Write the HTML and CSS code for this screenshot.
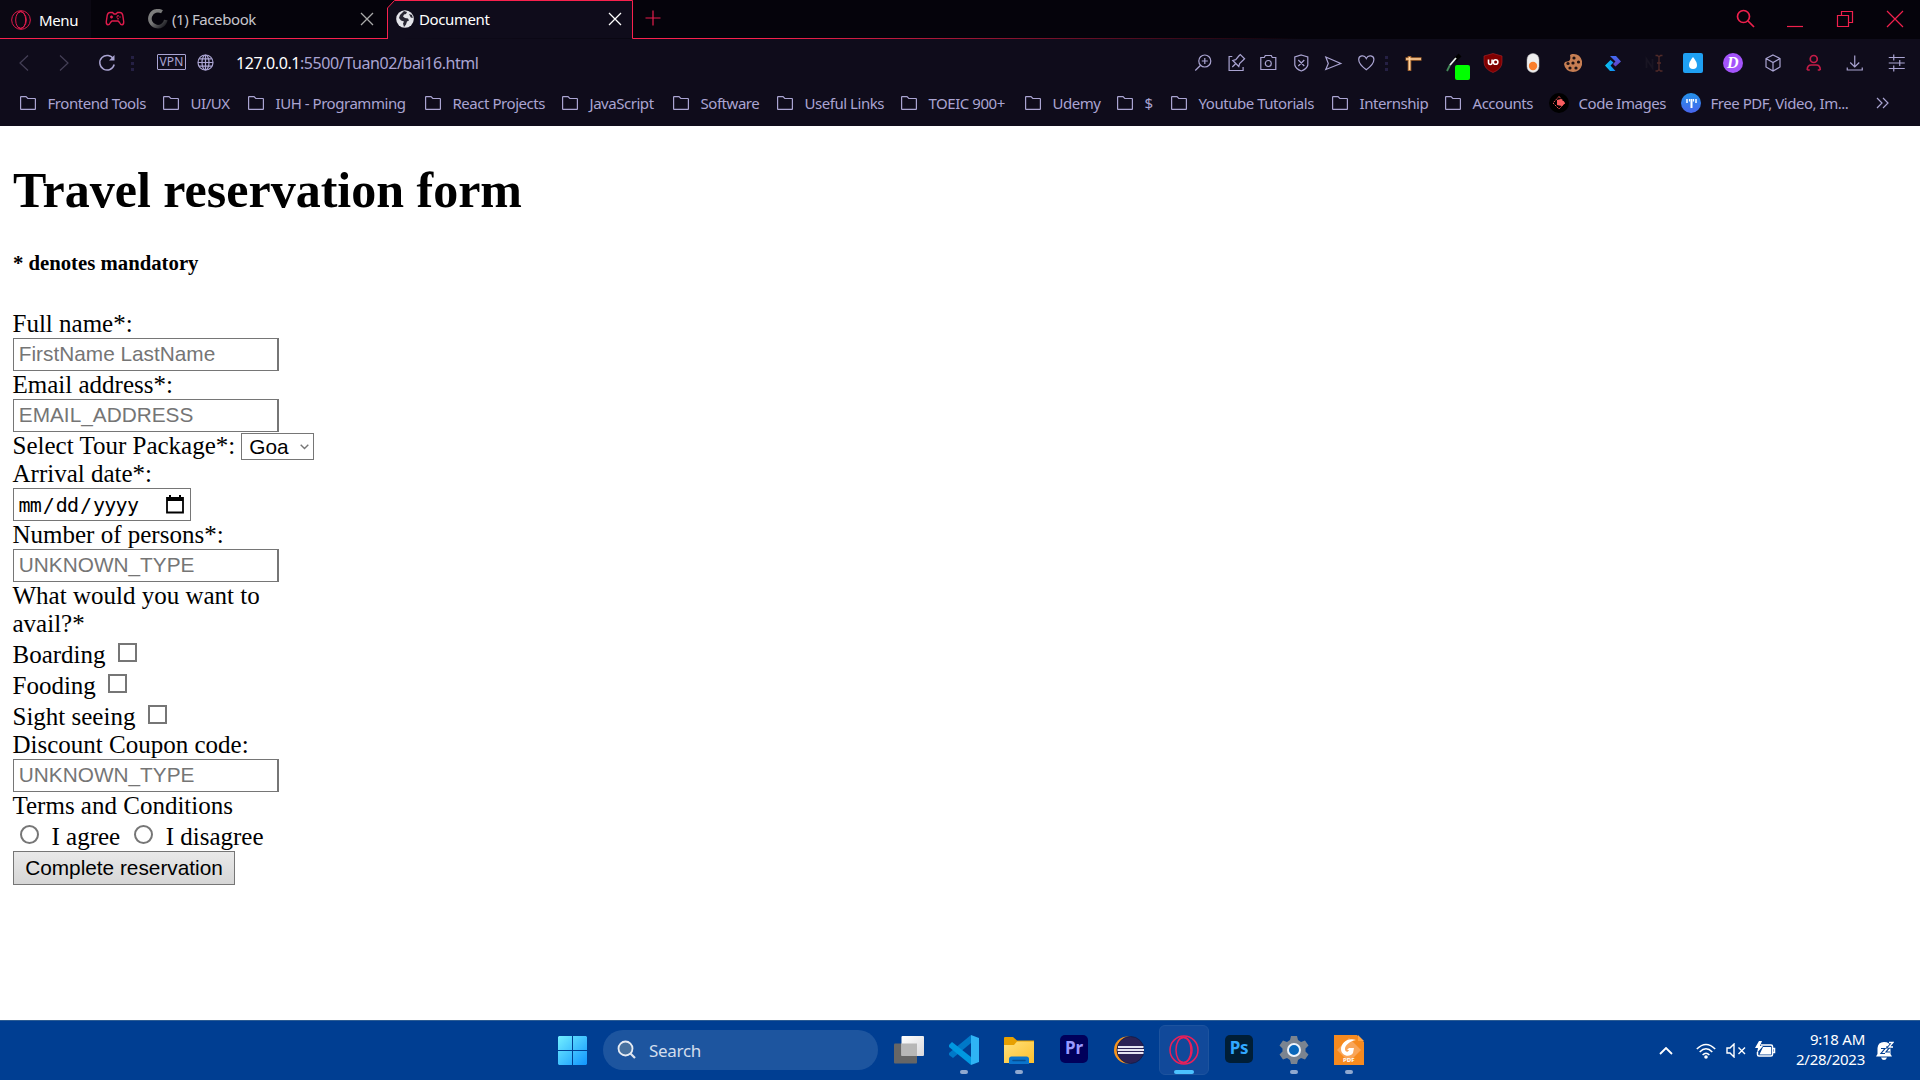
FILE: index.html
```html
<!DOCTYPE html>
<html lang="en">
<head>
<meta charset="utf-8">
<title>Document</title>
<link rel="stylesheet" href="styles.css">
</head>
<body>
<svg class="defs" width="0" height="0">
  <defs>
    <symbol id="folder" viewBox="0 0 16 14"><path d="M.6 13.1V1.1q0-.5.5-.5H6l1.8 1.9h7.1q.5 0 .5.5v10.1q0 .3-.5.3H1.1q-.5 0-.5-.4z" fill="none" stroke="currentColor" stroke-width="1.2"/></symbol>
    <symbol id="close" viewBox="0 0 14 14"><path d="M1 1l12 12M13 1L1 13" fill="none" stroke="currentColor" stroke-width="1.3"/></symbol>
    <symbol id="opera" viewBox="0 0 30 30"><g fill="none" stroke="currentColor" stroke-width="1.500"><circle cx="15" cy="15" r="14"/><ellipse cx="14.500" cy="15" rx="7.5" ry="12.8"/><path d="M10 4.500Q15 .5 19 4.500Q23 9 23 15T19 25.500Q15 29.500 10 25.500"/></g></symbol>
    <linearGradient id="win" x2="1" y2="1"><stop stop-color="#72efff"/><stop offset="1" stop-color="#1095ff"/></linearGradient>
    <linearGradient id="fold" x2="1" y2="1"><stop stop-color="#ffe17a"/><stop offset="1" stop-color="#fdc02e"/></linearGradient>
    <linearGradient id="arrow" x2="1" y2="0"><stop stop-color="#08c9ed"/><stop offset="1" stop-color="#1683f5"/></linearGradient>
    <linearGradient id="violet" x2="0" y2="1"><stop stop-color="#3f6cf5"/><stop offset="1" stop-color="#6a3fc0"/></linearGradient>
    <linearGradient id="white" x2="1" y2="1"><stop stop-color="#fff"/><stop offset="1" stop-color="#d8d8dc"/></linearGradient>
    <linearGradient id="pdf" x2="0" y2="1"><stop stop-color="#2492e8"/><stop offset="1" stop-color="#4865ed"/></linearGradient>
    <linearGradient id="spin" x2="1" y2="1"><stop stop-color="#808080"/><stop offset=".45" stop-color="#777"/><stop offset="1" stop-color="#15151b"/></linearGradient>
  </defs>
</svg>
<header class="browser">
  <div class="tabs">
    <div class="menu"><svg class="menu-logo" width="20" height="20"><use href="#opera"/></svg><span>Menu</span></div>
    <div class="pad"><svg width="20" height="16" viewBox="0 0 20 16" fill="none" stroke="#e01b4c" stroke-width="1.4"><path d="M5 1.500h2.500L9 3h2l1.500-1.500H15q2 0 2.700 2.500l1 6.500q.300 3-1.700 3.300-1.500 0-2.500-2.300L13 10H7l-1.500 1.500q-1 2.300-2.500 2.300-2-.3-1.700-3.300l1-6.500Q3 1.500 5 1.500z"/><path d="M5 6h3M6.500 4.500v3M13 4v1.500M13 7v1.500M11.500 6h1M14.500 6h1"/></svg></div>
    <div class="tab">
      <svg width="20" height="20" viewBox="0 0 20 20" fill="none" stroke="url(#spin)" stroke-width="3.6"><path d="M14 2.800A8 8 0 1 0 17.800 11"/></svg>
      <span>(1) Facebook</span><svg class="x" width="14" height="14"><use href="#close"/></svg>
    </div>
    <div class="tab active">
      <svg class="edge" width="247" height="39" viewBox="0 0 247 39"><path d="M.5 39V8L7.500.5h238V38.500H247" fill="#0f0c1b" stroke="#f9214d"/></svg>
      <svg width="18" height="18" viewBox="0 0 18 18"><circle cx="9" cy="9" r="8.800" fill="#e4e4ea"/><path d="M8 1l3 1-1 2-2 .5-1 2 2 1.500 3 .5 1 2-2 1-1 3-2 2.500-1-3.500 1-2-3-1L3 8l1-3zM13 4l3 1 .8 3-2-.5z" fill="#282633"/></svg>
      <span>Document</span><svg class="x" width="14" height="14"><use href="#close"/></svg>
    </div>
    <div class="strip">
      <svg width="16" height="16" viewBox="0 0 16 16"><path d="M8 .5v15M.5 8h15" stroke="#e71d4c" stroke-width="1.200"/></svg>
      <div class="window-buttons">
        <svg viewBox="0 0 20 20"><circle cx="8.500" cy="7.500" r="6" /><path d="M13 12l6 6"/></svg>
        <svg viewBox="0 0 20 20"><path d="M2 17.500h16"/></svg>
        <svg viewBox="0 0 20 20"><path d="M2.500 6.500h11v11h-11zM6.500 6V2.500h11v11H14"/></svg>
        <svg viewBox="0 0 20 20"><path d="M2 2l16 16M18 2L2 18"/></svg>
      </div>
    </div>
  </div>
  <div class="address">
    <svg class="dim" width="11" height="16" viewBox="0 0 11 16"><path d="M10 .5L2 8l8 7.500"/></svg>
    <svg class="dim forward" width="11" height="16" viewBox="0 0 11 16"><path d="M1 .5L9 8l-8 7.500"/></svg>
    <svg class="reload" width="18" height="18" viewBox="0 0 18 18"><path d="M15.500 5.200A7.300 7.300 0 1 0 16.200 10.500" stroke-width="1.500"/><path d="M16.500 1v5.500H11z" fill="#aaa4d2" stroke="none"/></svg>
    <i class="grip"></i>
    <span class="vpn">VPN</span>
    <svg class="web" width="17" height="17" viewBox="0 0 17 17"><circle cx="8.500" cy="8.500" r="7.500"/><ellipse cx="8.500" cy="8.500" rx="3.500" ry="7.500"/><path d="M8.500 1v15M1 8.500h15M2.300 4.800h12.400M2.300 12.200h12.400"/></svg>
    <span class="url"><b>127.0.0.1</b>:5500/Tuan02/bai16.html</span>
    <div class="page-actions">
      <svg viewBox="0 0 20 20"><circle cx="11.500" cy="8" r="6"/><path d="M7.300 12.300L2 17.500M8.500 8h6M11.500 5v6"/></svg>
      <svg viewBox="0 0 20 20"><path d="M6 3.500H2.800v14h14V14M6 14l3.500-3.500M6.500 7.500l6 6 .8-3L17 7l1.300-1.300L14 1.500 12.500 3 9.500 6.700z"/></svg>
      <svg viewBox="0 0 20 20"><path d="M2.500 4.500H6l1-2h6l1 2h3.500v12h-15z"/><circle cx="10" cy="10.500" r="3"/></svg>
      <svg viewBox="0 0 20 20"><path d="M10 2l6.500 2v8q-1 4-6.500 6-5.500-2-6.500-6V4zM7 7l6 6M13 7l-6 6"/></svg>
      <svg viewBox="0 0 20 20"><path d="M2.500 4l15 6.500-15 6 2.500-6z"/></svg>
      <svg viewBox="0 0 20 20"><path d="M10 16.800C3.500 12 2.400 9.500 2.400 6.500c0-4 5.600-5.200 7.600-1 2-4.200 7.600-3 7.600 1 0 3-1.100 5.500-7.600 10.300z"/></svg>
    </div>
    <i class="grip second"></i>
    <div class="extensions">
      <svg viewBox="0 0 20 20"><path d="M2.500 6h16M6.500 3v15" stroke="#a8672f" stroke-width="3.600"/><path d="M3 6h15M6.500 4v13" stroke="#ffd4a0" stroke-width="1.700"/></svg>
      <span class="picker"><svg viewBox="0 0 20 20"><path d="M12 7l5-5" stroke="#000" stroke-width="4"/><path d="M4 18l3-6" stroke="#438b59" stroke-width="1.800"/><path d="M7 12l6-7" stroke="#e9f0ec" stroke-width="1.800"/></svg><i></i></span>
      <svg viewBox="0 0 20 20"><path d="M10 .500l9 2.500v6q0 7-9 10.500Q1 16 1 9V3z" fill="#800000" stroke="#b02429" stroke-width=".6"/><path d="M5.500 6.500v3q0 2 1.800 2t1.800-2v-3" stroke="#fff" stroke-width="1.600"/><circle cx="12.600" cy="9" r="2.300" stroke="#fff" stroke-width="1.600"/></svg>
      <svg viewBox="0 0 20 20"><rect x="4" y=".5" width="12" height="19" rx="6" fill="#eee" stroke="#bbb" stroke-width=".5"/><circle cx="10" cy="13" r="4.200" fill="#fa7e2c" stroke="none"/></svg>
      <svg viewBox="0 0 20 20"><path d="M7 2l2-1q8-1 10 7v4q-2 7-9 7-8-1-9-8l1-2 4-1q2-2 1-6z" fill="#c67e53" stroke="none"/><g fill="#1d1113" stroke="none"><circle cx="11" cy="5" r="1.600"/><circle cx="5" cy="10.500" r="1.600"/><circle cx="10" cy="10" r="1.600"/><circle cx="7" cy="15" r="1.600"/><circle cx="13" cy="15" r="1.600"/><circle cx="15.500" cy="9" r="1.600"/></g></svg>
      <svg viewBox="0 0 20 20"><path d="M7 3h6l5 5.500-5.500 5L10 11l2.500-2.500z" fill="url(#violet)" stroke="none"/><path d="M7.500 7l3 2.500-3 3 5 5.500H7L2 12.500z" fill="url(#arrow)" stroke="none"/></svg>
      <svg viewBox="0 0 20 20" class="caret"><path d="M0 15V6l6 9V6" stroke="#191523" stroke-width="1.800"/><path d="M9 2.500h2L12.500 4 14 2.500h2M12.500 4v13M9 18h2l1.500-1.500L14 18h2M10.500 10h4" stroke="#512a29" stroke-width="1.300"/></svg>
      <svg viewBox="0 0 20 20"><rect width="20" height="20" rx="2" fill="#1fa0f2" stroke="none"/><path d="M10 4q4 5 4 8a4 4 0 0 1-8 0q0-3 4-8z" fill="#fff" stroke="none"/></svg>
      <span class="dash">D</span>
      <svg viewBox="0 0 20 20"><path d="M10 2l7 3.500v8.500l-7 4-7-4V5.500zM3 5.500l7 4 7-4M10 9.500V18"/></svg>
    </div>
    <div class="account">
      <svg viewBox="0 0 20 20" class="red"><circle cx="10" cy="6" r="3.500"/><path d="M3.500 17q0-5 4-5h5q4 0 4 5M6 17H3.500M16.500 17H14"/></svg>
      <svg viewBox="0 0 20 20"><path d="M10 2.500v11M5.500 9.500L10 14l4.500-4.500M2.500 14.500V17h15v-2.500"/></svg>
      <svg viewBox="0 0 20 20"><path d="M2 4.500h16M2 10h16M2 15.500h16M7 1.500v6M13 7v6M7 12.500v6"/></svg>
    </div>
  </div>
  <nav class="bookmarks">
    <a><svg><use href="#folder"/></svg>Frontend Tools</a>
    <a><svg><use href="#folder"/></svg>UI/UX</a>
    <a><svg><use href="#folder"/></svg>IUH - Programming</a>
    <a><svg><use href="#folder"/></svg>React Projects</a>
    <a><svg><use href="#folder"/></svg>JavaScript</a>
    <a><svg><use href="#folder"/></svg>Software</a>
    <a><svg><use href="#folder"/></svg>Useful Links</a>
    <a><svg><use href="#folder"/></svg>TOEIC 900+</a>
    <a><svg><use href="#folder"/></svg>Udemy</a>
    <a><svg><use href="#folder"/></svg>$</a>
    <a><svg><use href="#folder"/></svg>Youtube Tutorials</a>
    <a><svg><use href="#folder"/></svg>Internship</a>
    <a><svg><use href="#folder"/></svg>Accounts</a>
    <a><svg class="round" viewBox="0 0 20 20"><circle cx="10" cy="10" r="10" fill="#000"/><path d="M10 3.500l6 6.500-6 6-6-6z" fill="none" stroke="#ea5354" stroke-dasharray="2 1"/><path d="M8 7l4-1 4 4-3 3-5-1z" fill="#fa5e60"/></svg>Code Images</a>
    <a><svg class="round" viewBox="0 0 20 20"><circle cx="10" cy="10" r="10" fill="url(#pdf)"/><path d="M6 6v4M15 6v4" stroke="#fff" stroke-width="1.500"/><path d="M10.500 6v9" stroke="#fff" stroke-width="2"/><path d="M8.500 6v2.500M12.500 6v2.500" stroke="#fff" stroke-width="1.200"/></svg>Free PDF, Video, Im...</a>
    <a><svg class="more" viewBox="0 0 14 14" fill="none" stroke="#aaa4d2" stroke-width="1.200"><path d="M1 2l5 5-5 5M7 2l5 5-5 5"/></svg></a>
  </nav>
</header>

<main class="page">
  <h1>Travel reservation form</h1>
  <h5>* denotes mandatory</h5>
  <form>
    <label>Full name*:</label>
    <input class="text" placeholder="FirstName LastName">
    <label>Email address*:</label>
    <input class="text" placeholder="EMAIL_ADDRESS">
    <div class="row">Select Tour Package*:<span class="select">Goa<svg width="9" height="6" viewBox="0 0 9 6"><path d="M.7.700l3.800 3.800L8.300.700" fill="none" stroke="#767676" stroke-width="1.400"/></svg></span></div>
    <label>Arrival date*:</label>
    <div class="date"><span>mm</span><i>/</i><span>dd</span><i>/</i><span>yyyy</span><svg width="18" height="19" viewBox="0 0 18 19"><path d="M1 3h16v14.500H1z" fill="none" stroke="#000" stroke-width="1.800"/><path d="M1 2h16v4H1zM3 0h2v3H3zM13 0h2v3h-2z"/></svg></div>
    <label>Number of persons*:</label>
    <input class="text" placeholder="UNKNOWN_TYPE">
    <label class="question">What would you want to avail?*</label>
    <label class="option">Boarding<input type="checkbox"></label>
    <label class="option">Fooding<input type="checkbox"></label>
    <label class="option">Sight seeing<input type="checkbox"></label>
    <label>Discount Coupon code:</label>
    <input class="text" placeholder="UNKNOWN_TYPE">
    <label>Terms and Conditions</label>
    <div class="option terms"><input type="radio"><span class="agree">I agree</span><input type="radio"><span>I disagree</span></div>
    <button type="button">Complete reservation</button>
  </form>
</main>

<footer class="taskbar">
  <svg class="start" width="29" height="29" viewBox="0 0 29 29"><path d="M1 0h13v14H0V1zM15 0h13l1 1v13H15zM0 15h14v14H1l-1-1zM15 15h14v13l-1 1H15z" fill="url(#win)"/></svg>
  <div class="search"><svg width="20" height="20" viewBox="0 0 20 20"><circle cx="8.500" cy="8.500" r="7" fill="#47719f" stroke="#e6ebf3" stroke-width="1.800"/><path d="M13.500 13.500l4.500 4.500" stroke="#dce3ee" stroke-width="2.200"/></svg>Search</div>
  <div class="apps">
    <span><svg viewBox="0 0 30 30"><rect y="8.500" width="23" height="20" rx="1" fill="#666"/><rect x="7.500" y="1" width="22.500" height="20" rx="1" fill="url(#white)"/><path d="M7.500 8.500H23V21H7.500z" fill="#b7b7b7"/></svg></span>
    <span class="open"><svg viewBox="0 0 30 30"><path d="M22 0v8L4 23l-4-3v-2z" fill="#0078c8"/><path d="M3 7L0 10v2l22 18v-8z" fill="#0098e0"/><path d="M22 0l8 3v24l-8 3z" fill="#2fb4f5"/></svg></span>
    <span class="open"><svg viewBox="0 0 30 30"><path d="M0 3q0-1 1-1h8l4 3.500H30V12H0z" fill="#e7a000"/><path d="M0 10h10l3-3.500h17V28H0z" fill="url(#fold)"/><path d="M5 29v-5q0-2.500 2.500-2.500h15q2.500 0 2.500 2.500v5z" fill="#0a74cc"/><path d="M9 25.500h12" stroke="#074d91" stroke-width="1.500" stroke-linecap="round"/></svg></span>
    <span><b class="pr">Pr</b></span>
    <span><svg viewBox="0 0 30 30"><circle cx="13.500" cy="15" r="13.500" fill="#f7941e"/><circle cx="16.500" cy="15" r="13.500" fill="#2c2255" stroke="#111a45" stroke-width=".8"/><path d="M4 12h25.500M3.500 15h26.500M4 18h25.500" stroke="#e5e4f1" stroke-width="2"/></svg></span>
    <span class="current"><svg><use href="#opera"/></svg></span>
    <span><b class="ps">Ps</b></span>
    <span class="open"><svg viewBox="0 0 30 30"><path d="M12 1h6l1 4 3 2 4-1.500 3.500 5-3 3v3l3 3-3.500 5L22 23l-3 2-1 4h-6l-1-4-3-2-4 1.500-3.500-5 3-3v-3l-3-3 3.500-5L8 7l3-2z" fill="#7b8490"/><circle cx="15" cy="15" r="6" fill="#0967bb" stroke="#eef4fc" stroke-width="2"/></svg></span>
    <span class="open foxit"><svg viewBox="0 0 30 30"><path d="M0 0h23l7 7v23H0z" fill="#f68a1f"/><path d="M24 0l6 6h-6z" fill="#ffa443"/><path d="M15 3l12 12-12 12L3 15z" fill="#f9a558"/><path d="M22 5C14 2 7 8 7 14c0 7 9 9 12 4l1-5h-5l-2 2h2c-1 3-4 2-4-1 0-4 5-8 11-9z" fill="#fff"/></svg><em>PDF</em></span>
  </div>
  <div class="tray">
    <svg width="14" height="8" viewBox="0 0 14 8"><path d="M1 7l6-6 6 6" stroke-width="1.800"/></svg>
    <svg class="wifi" width="20" height="16" viewBox="0 0 20 16"><path d="M.8 6Q10-3 19.200 6M3.700 9Q10 2.500 16.300 9M6.600 12Q10 8.500 13.400 12" stroke-width="1.500"/><circle cx="10" cy="14" r="1.800" fill="#fff" stroke="none"/></svg>
    <svg class="sound" width="20" height="15" viewBox="0 0 20 15"><path d="M1 5h3l4-4v13l-4-4H1zM12.500 4.500l6.500 6.500M19 4.500L12.500 11" stroke-width="1.400"/></svg>
    <svg class="battery" width="21" height="17" viewBox="0 0 21 17"><path d="M6 4h10q1.500 0 1.500 1.500v8q0 1.500-1.500 1.500H4q-1.500 0-1.500-1.500V11M18 7.500h1.500v4H18" stroke-width="1.500"/><path d="M8 6h8v7.500H4.500zM4 0L0 7h3l-1 5 6-7H5l2-5z" fill="#fff" stroke="none"/></svg>
    <div class="clock">9:18 AM<br>2/28/2023</div>
    <svg class="bell" width="18" height="20" viewBox="0 0 18 20"><path d="M8 1q6 0 6.500 5v7l1.500 2.500H0L1.500 13V7Q2 1 8 1zM5 16.500h6q-1 2.500-3 2.500t-3-2.500z" fill="#fff" stroke="none"/><path d="M5 7.500h4l-4 5h4" stroke="#003e92" stroke-width="1.200"/><path d="M10 6h4l-4 5h4" stroke="#003e92" stroke-width="1.200"/><path d="M13 1.500h4l-4 4.500h4" stroke="#003e92" stroke-width="3"/><path d="M13 1.500h4l-4 4.500h4" stroke-width="1.300"/></svg>
  </div>
</footer>
</body>
</html>
```
FILE: styles.css
```css
* { box-sizing: border-box; }
body {
  margin: 0;
  width: 1920px;
  height: 1080px;
  overflow: hidden;
  display: flex;
  flex-direction: column;
  background: #fff;
  font-family: "Noto Sans", sans-serif;
}
.defs { position: absolute; }
svg { display: block; flex: none; }

/* Browser chrome */
.browser { height: 126px; background: #0f0c1b; color: #aaa4d2; font-size: 15px; letter-spacing: -.4px; flex: none; }
.tabs { height: 39px; display: flex; background: #05030b; color: #c7c5cc; }
.menu { width: 91px; display: flex; align-items: center; gap: 8px; padding: 1px 0 0 11px; background: #0b0813; color: #fff; border-bottom: 1px solid #f9214d; }
.menu-logo { color: #e01b4c; }
.pad { width: 49px; padding: 11px 0 0 14px; border-bottom: 1px solid #f9214d; }
.tab { width: 247px; display: flex; align-items: center; gap: 4px; padding: 0 13px 0 8px; border-bottom: 1px solid #f9214d; }
.tab .x { margin-left: auto; color: #aaa; }
.tab.active { position: relative; padding: 0 12px 1px 9px; gap: 5px; color: #fff; border: 0; }
.tab.active > * { position: relative; }
.tab.active .edge { position: absolute; left: 0; top: 0; }
.tab.active .x { color: #fff; }
.strip { flex: 1; display: flex; align-items: flex-start; padding: 10px 15px 0 11px; background: linear-gradient(90deg, #f9214d 0, #f9214d 10%, transparent 52%) bottom / 100% 1px no-repeat; }
.window-buttons { margin-left: auto; display: flex; gap: 30px; margin-top: -1px; }
.window-buttons svg { width: 20px; height: 20px; fill: none; stroke: #f0204d; stroke-width: 1.2; }
.window-buttons svg:first-child { stroke-width: 1.7; }
.address { height: 48px; display: flex; align-items: center; padding-left: 18px; }
.address svg { fill: none; stroke: #aaa4d2; stroke-width: 1.2; }
.address .dim { stroke: #454057; }
.forward { margin-left: 30px; }
.reload { margin-left: 28px; }
.grip { width: 3px; height: 15px; margin-left: 15px; background: repeating-linear-gradient(#252044 0 3px, transparent 3px 6px); }
.vpn { width: 29px; height: 16px; margin-left: 23px; border: 1px solid #aaa4d2; border-radius: 1px; font-size: 12px; line-height: 14px; text-align: center; letter-spacing: .1px; margin-top: -2px; }
.web { margin: -1px 0 0 11px; }
.url { width: 951px; margin-left: 22px; font-size: 16px; letter-spacing: -.42px; }
.url b { font-weight: 400; color: #fff; }
.page-actions, .extensions, .account { display: flex; margin-top: -1px; }
.page-actions > *, .extensions > *, .account > * { display: block; height: 20px; }
.page-actions svg { width: 32.6px; }
.grip.second { margin-left: 2px; }
.extensions { margin-left: 5px; }
.extensions > svg, .extensions > span { width: 40px; }
.picker { position: relative; }
.picker svg { width: 40px; height: 20px; }
.picker i { position: absolute; left: 22px; top: 12px; width: 15px; height: 15px; border-radius: 2px; background: #0f0; }
.caret { overflow: visible; }
.extensions > .caret { padding-left: 7px; }
.extensions .dash { width: 20px; margin: 0 10px; border-radius: 50%; background: #a454fb; color: #fff; font: italic bold 16px/20px "Liberation Serif", serif; text-align: center; }
.account svg { width: 41.5px; }
.address .red { stroke: #c41c48; stroke-width: 1.7; }
.bookmarks { height: 39px; padding: 0 0 7px 20px; display: grid; align-items: center; grid-template-columns: 143px 85px 177px 137px 111px 104px 124px 124px 92px 54px 161px 113px 104px 132px 194px 20px; letter-spacing: -.46px; }
.bookmarks a { display: flex; align-items: center; gap: 11.5px; white-space: nowrap; }
.bookmarks svg { width: 16px; height: 14px; }
.bookmarks .round { width: 20px; height: 20px; margin-right: -2px; }

/* Web page */
.page { flex: 1; padding: 1px 12.5px 0; font-family: "Liberation Serif", serif; font-size: 25px; line-height: 28px; color: #000; }
h1 { margin: 34px 0 0 .4px; font-size: 50px; line-height: 58px; }
h5 { margin: 32px 0 0 .4px; font-size: 20.75px; line-height: 24px; }
form { width: 266px; padding-top: 35px; display: flex; flex-direction: column; align-items: flex-start; }
form > label { display: block; }
form input, form button, .select { font-family: "Liberation Sans", sans-serif; font-size: 20.8px; letter-spacing: 0; }
.text { width: 266px; height: 33px; margin: 0; padding: 0 5px 2px 5.3px; border: 1px solid #767676; border-right-width: 2px; border-radius: 0; background: #fff; }
.text::placeholder { color: #757575; opacity: 1; }
.row { display: flex; white-space: nowrap; }
.select { display: flex; align-items: center; width: 73px; height: 27px; margin: 1px 0 0 6px; padding: 0 4px 0 7px; border: 1px solid #767676; justify-content: space-between; }
.date { display: flex; align-items: center; width: 178px; height: 33px; padding: 1px 6px 0 5px; border: 1px solid #767676; font: 20px "DejaVu Sans Mono", monospace; letter-spacing: -.7px; }
.date i { width: 14.5px; font-style: normal; text-align: center; }
.date svg { margin: -2px 0 0 auto; }
form > .option { display: flex; height: 31px; padding-top: 3px; }
.option input { appearance: none; width: 19px; height: 19px; margin: 2px 0 0 12.5px; border: 2px solid #767676; border-radius: 0; background: #fff; }
.option input[type="radio"] { margin: 2px 13px 0 7px; border-radius: 50%; }
.agree { margin-right: 6.5px; }
.terms { white-space: nowrap; }
button { width: 222px; height: 34px; padding: 0 0 0 1px; border: 1px solid #767676; border-radius: 0; background: linear-gradient(#e9e9e9, #d6d6d6); color: #000; }

/* Taskbar */
.taskbar { height: 60px; flex: none; display: flex; align-items: center; padding-left: 558px; border-top: 1px solid #2c5c93; background: #003e92; color: #fff; }
.search { width: 275px; height: 40px; margin: -1px 0 0 16px; padding-left: 14px; display: flex; align-items: center; gap: 12px; border-radius: 20px; background: #1d559f; color: #d3deed; font-size: 17px; letter-spacing: -.3px; }
.apps { height: 50px; display: flex; margin-left: 6px; margin-top: -1px; gap: 5px; }
.apps > span { position: relative; width: 50px; height: 50px; display: grid; place-items: center; border-radius: 6px; }
.apps svg { width: 30px; height: 30px; }
.apps .current { background: #11499a; border: 1px solid #1d539e; color: #e9205a; }
.open::after, .current::after { content: ""; position: absolute; left: 21px; bottom: 1px; width: 8px; height: 4px; border-radius: 2px; background: #8fa9d0; }
.current::after { left: 14px; bottom: 0; width: 20px; background: #4cc2ff; }
.apps b { width: 28px; height: 28px; margin-top: -2px; border-radius: 5px; font-size: 17px; line-height: 25px; text-align: center; letter-spacing: -.2px; }
.pr { background: #00005b; color: #9999ff; }
.ps { background: #001e36; color: #31a8ff; }
.foxit em { position: absolute; left: 19px; top: 31px; font: bold 6px/8px "Open Sans", sans-serif; color: #fff; }
.tray { display: flex; align-items: center; margin-left: 285px; }
.tray svg { fill: none; stroke: #fff; }
.wifi { margin-left: 23px; }
.sound { margin-left: 10px; }
.battery { margin-left: 9px; margin-top: -2px; }
.clock { width: 89px; margin-top: -3px; font-size: 15px; line-height: 20px; text-align: right; letter-spacing: -.25px; }
.bell { margin-left: 11px; }
```
